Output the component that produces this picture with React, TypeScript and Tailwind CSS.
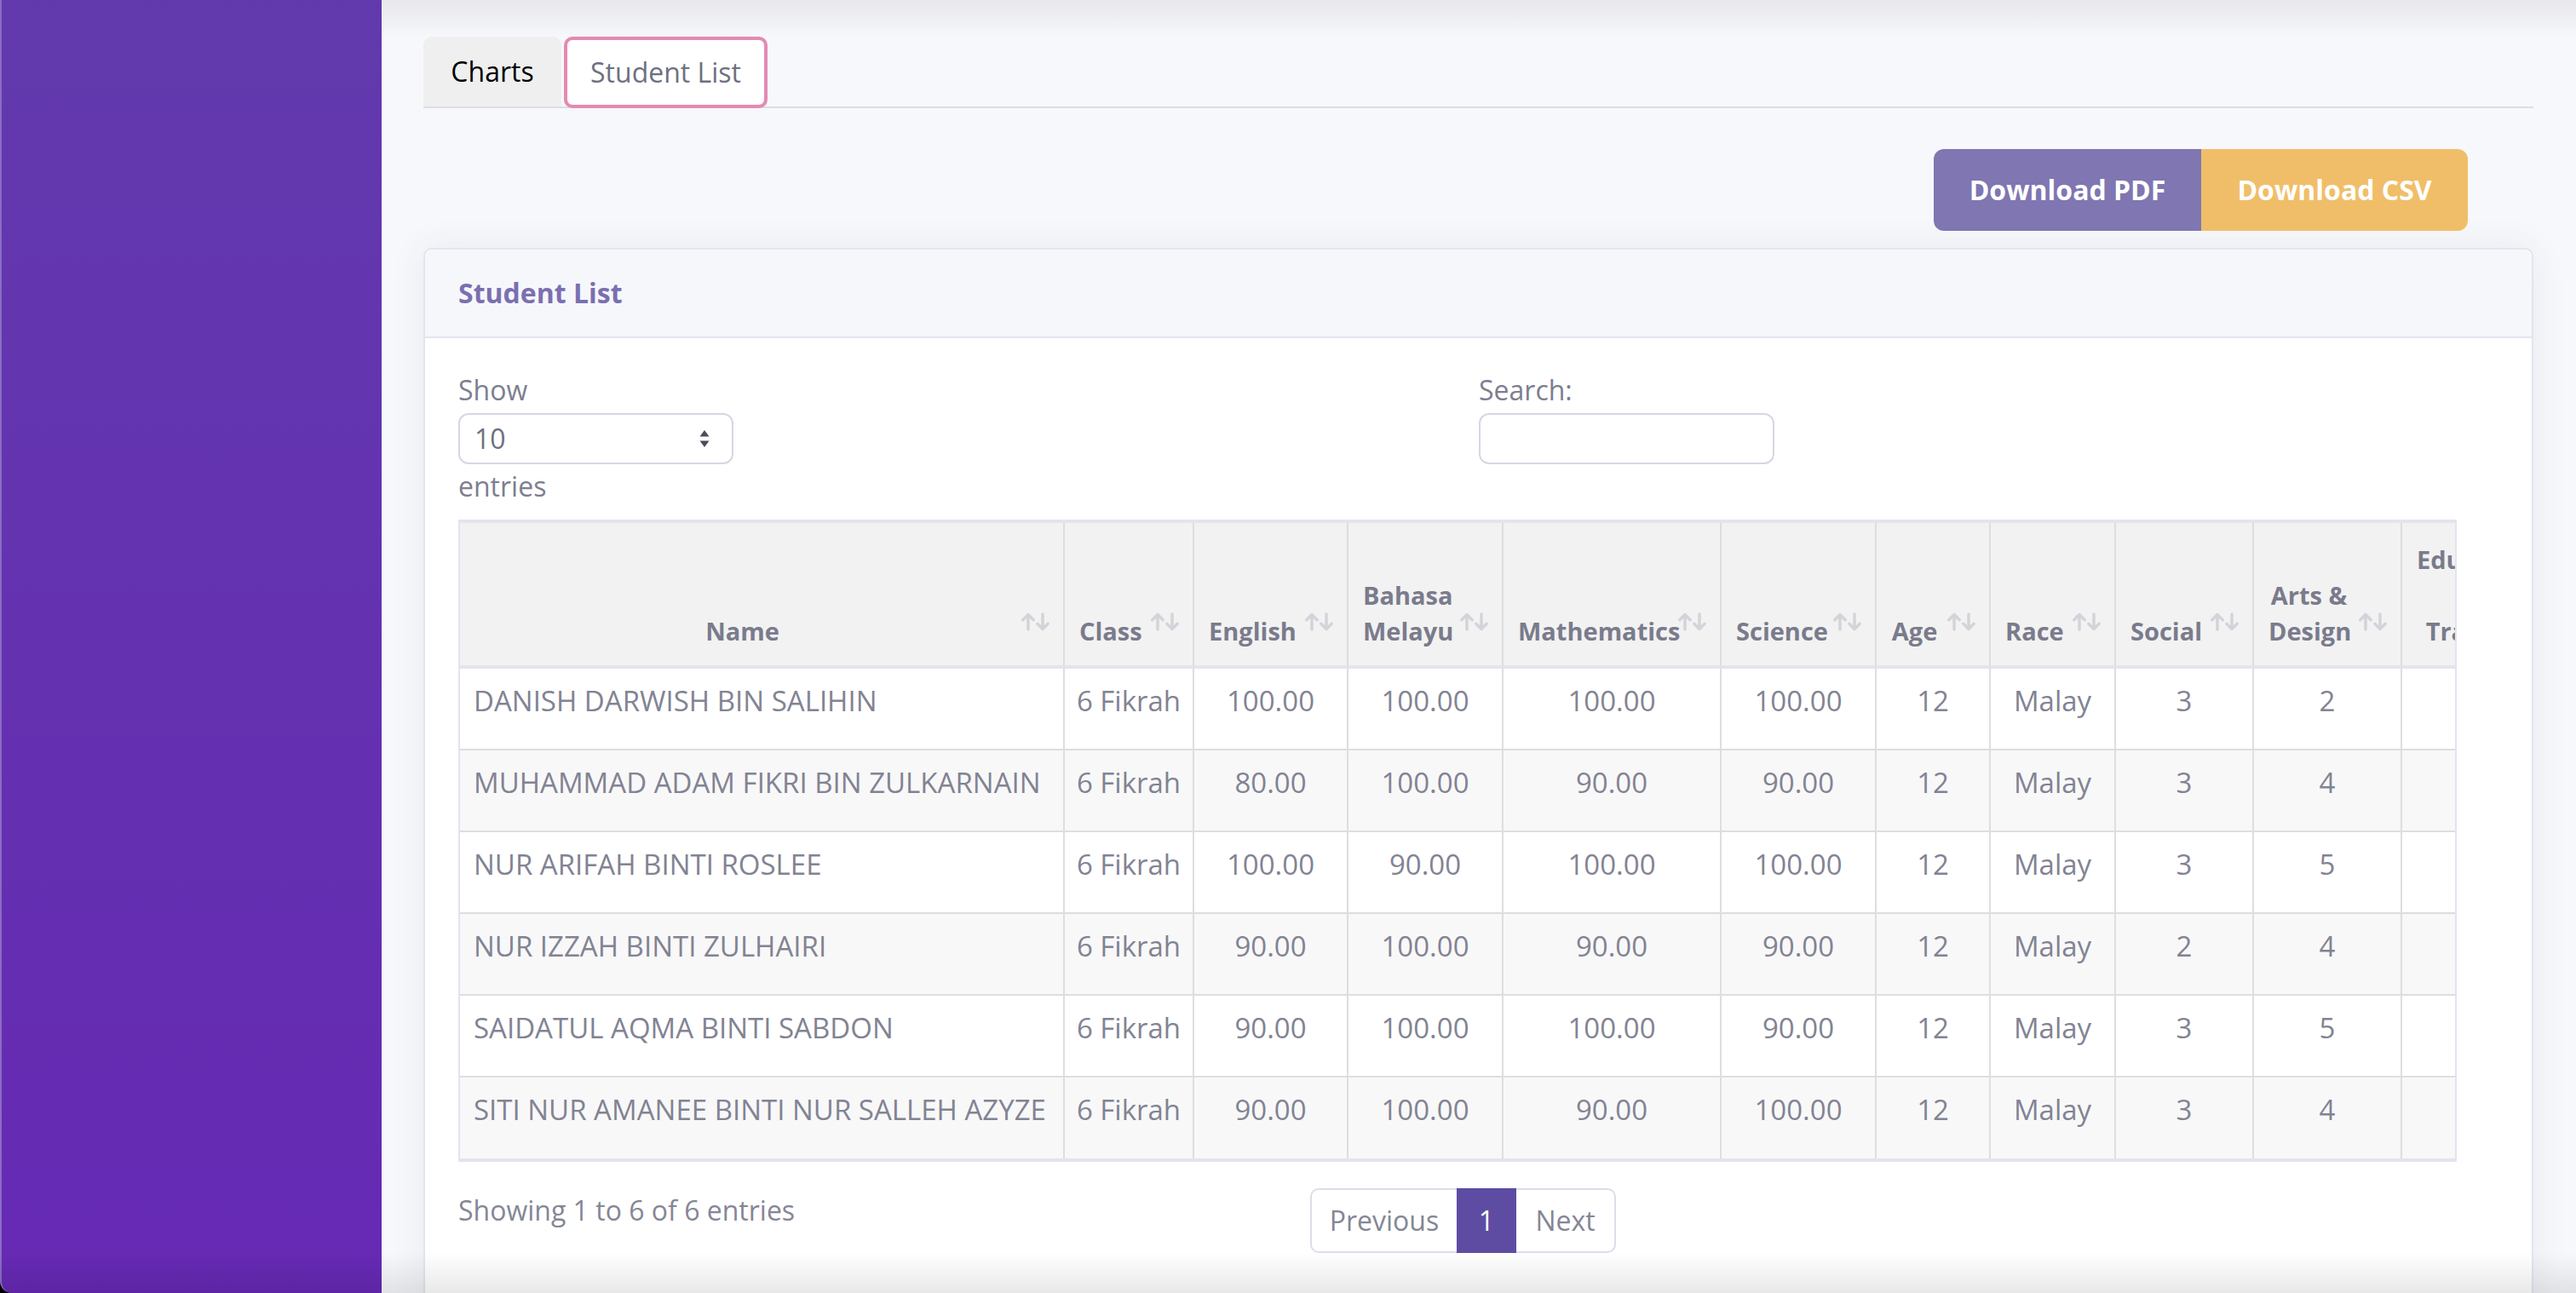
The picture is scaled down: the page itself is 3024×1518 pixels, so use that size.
import React from "react";

const HEADERS: { lines: string[]; w: string }[] = [
  { lines: ["Name"], w: "w-[710px]" },
  { lines: ["Class"], w: "w-[152px]" },
  { lines: ["English"], w: "w-[181px]" },
  { lines: ["Bahasa", "Melayu"], w: "w-[182px]" },
  { lines: ["Mathematics"], w: "w-[256px]" },
  { lines: ["Science"], w: "w-[182px]" },
  { lines: ["Age"], w: "w-[134px]" },
  { lines: ["Race"], w: "w-[147px]" },
  { lines: ["Social"], w: "w-[162px]" },
  { lines: ["Arts &", "Design"], w: "w-[174px]" },
  { lines: ["Educational", "&", "Training"], w: "w-[220px]" },
];

const ROWS = [
  ["DANISH DARWISH BIN SALIHIN", "6 Fikrah", "100.00", "100.00", "100.00", "100.00", "12", "Malay", "3", "2", ""],
  ["MUHAMMAD ADAM FIKRI BIN ZULKARNAIN", "6 Fikrah", "80.00", "100.00", "90.00", "90.00", "12", "Malay", "3", "4", ""],
  ["NUR ARIFAH BINTI ROSLEE", "6 Fikrah", "100.00", "90.00", "100.00", "100.00", "12", "Malay", "3", "5", ""],
  ["NUR IZZAH BINTI ZULHAIRI", "6 Fikrah", "90.00", "100.00", "90.00", "90.00", "12", "Malay", "2", "4", ""],
  ["SAIDATUL AQMA BINTI SABDON", "6 Fikrah", "90.00", "100.00", "100.00", "90.00", "12", "Malay", "3", "5", ""],
  ["SITI NUR AMANEE BINTI NUR SALLEH AZYZE", "6 Fikrah", "90.00", "100.00", "90.00", "100.00", "12", "Malay", "3", "4", ""],
];

const SortIcon = () => (
  <svg
    width="34"
    height="22"
    viewBox="0 0 34 22"
    fill="none"
    stroke="#d3d3da"
    strokeWidth="3.5"
    strokeLinecap="round"
    strokeLinejoin="round"
    className="absolute bottom-[40px] right-[15px]"
  >
    <path d="M8 20V2.5M1.8 8.7L8 2.5l6.2 6.2" />
    <path d="M25 2v17.5M18.8 13.3L25 19.5l6.2-6.2" />
  </svg>
);

const SelectArrows = () => (
  <svg width="12" height="22" viewBox="0 0 12 22" fill="#4d4d5a">
    <path d="M6 1L11.5 8.5H0.5Z" />
    <path d="M6 21L11.5 13.5H0.5Z" />
  </svg>
);

export default function App() {
  return (
    <div className="relative flex h-[1518px] w-[3024px] overflow-hidden bg-black font-['Open_Sans',sans-serif]">
      <aside className="w-[448px] shrink-0 rounded-bl-[14px] border-l-2 border-[#8a6cc4] bg-linear-to-b from-[#6239ad] to-[#6629b4]" />

      <main className="relative flex-1 bg-[#f7f8fb] pl-[49px] pr-[50px]">
        <div className="pointer-events-none absolute inset-x-0 top-0 h-[44px] bg-linear-to-b from-[#e7e7ec] to-transparent" />

        {/* tabs */}
        <div className="relative mt-[43px] flex items-start border-b-2 border-[#dcdde6]">
          <div className="flex h-[82px] w-[162px] items-center justify-center rounded-t-[10px] bg-[#efefef] text-[32px] text-black">
            Charts
          </div>
          <div className="-mb-[2px] ml-[3px] flex h-[84px] w-[239px] items-center justify-center rounded-[10px] border-4 border-[#e48ab3] bg-white text-[32px] text-[#6e7081]">
            Student List
          </div>
        </div>

        {/* export buttons */}
        <div className="mt-[48px] flex justify-end pr-[77px]">
          <div className="flex overflow-hidden rounded-[12px]">
            <button className="flex h-[96px] w-[314px] items-center justify-center bg-[#7f76b2] text-[32px] font-bold text-white">
              Download PDF
            </button>
            <button className="flex h-[96px] w-[313px] items-center justify-center bg-[#f0be69] text-[32px] font-bold text-white">
              Download CSV
            </button>
          </div>
        </div>

        {/* card */}
        <section className="mt-[20px] rounded-[10px] border-2 border-[#e3e4ee] bg-white shadow-[0_0_40px_rgba(60,60,110,0.08)]">
          <header className="flex h-[104px] items-center rounded-t-[10px] border-b-2 border-[#e3e4ee] bg-[#f6f7fb] px-[39px] text-[32px] font-bold text-[#7b6fb0]">
            Student List
          </header>

          <div className="px-[39px] pb-[60px] pt-[37px]">
            <div className="flex text-[32px] leading-[48px] text-[#7d7e8f]">
              <div className="w-[1198px]">
                <div>Show</div>
                <div className="mt-[3px] flex h-[60px] w-[323px] items-center justify-between rounded-[12px] border-2 border-[#d6d7e4] bg-white pl-[17px] pr-[26px] text-[#6e7081]">
                  <span>10</span>
                  <SelectArrows />
                </div>
                <div className="mt-[2px]">entries</div>
              </div>
              <div>
                <div>Search:</div>
                <div className="mt-[3px] h-[60px] w-[347px] rounded-[12px] border-2 border-[#d6d7e4] bg-white" />
              </div>
            </div>

            {/* table */}
            <div className="mt-[15px] w-[2346px] overflow-hidden border-x-2 border-b-4 border-t-4 border-[#e3e4ee]">
              <div className="flex w-max">
                {HEADERS.map((h, i) => (
                  <div
                    key={i}
                    className={`relative flex h-[171px] shrink-0 flex-col justify-end border-b-4 border-r-2 border-b-[#e3e4ee] border-r-[#dedede] bg-[#f2f2f2] pb-[19px] pr-[60px] text-center text-[29px] font-bold leading-[42px] text-[#7a7b8c] ${h.w} ${i === 0 ? "pl-[15px]" : "pl-[17px]"}`}
                  >
                    {h.lines.map((l, j) => (
                      <div key={j} className="whitespace-nowrap">
                        {l}
                      </div>
                    ))}
                    <SortIcon />
                  </div>
                ))}
              </div>
              {ROWS.map((row, r) => (
                <div key={r} className={`flex w-max ${r % 2 === 1 ? "bg-[#f8f8f8]" : "bg-white"}`}>
                  {row.map((cell, c) => (
                    <div
                      key={c}
                      className={`shrink-0 overflow-hidden whitespace-nowrap border-r-2 border-[#dedede] pt-[14px] text-[33px] leading-[48px] text-[#828393] ${HEADERS[c].w} ${r === ROWS.length - 1 ? "h-[95px]" : "h-[96px] border-b-2"} ${c === 0 ? "pl-[16px] text-left" : "text-center"}`}
                    >
                      {cell}
                    </div>
                  ))}
                </div>
              ))}
            </div>

            {/* footer */}
            <div className="mt-[31px] flex items-start text-[32px] text-[#858696]">
              <div className="w-[1000px] pt-[2px] leading-[48px]">Showing 1 to 6 of 6 entries</div>
              <div className="flex h-[76px]">
                <div className="flex w-[172px] items-center justify-center rounded-l-[10px] border-y-2 border-l-2 border-[#dcdde9]">
                  Previous
                </div>
                <div className="flex w-[70px] items-center justify-center bg-[#5e4ca2] text-white">1</div>
                <div className="flex w-[117px] items-center justify-center rounded-r-[10px] border-y-2 border-r-2 border-[#dcdde9]">
                  Next
                </div>
              </div>
            </div>
          </div>
        </section>
      </main>

      <div className="pointer-events-none absolute inset-x-0 bottom-0 h-[48px] bg-linear-to-b from-transparent to-[rgba(0,0,0,0.09)]" />
    </div>
  );
}
